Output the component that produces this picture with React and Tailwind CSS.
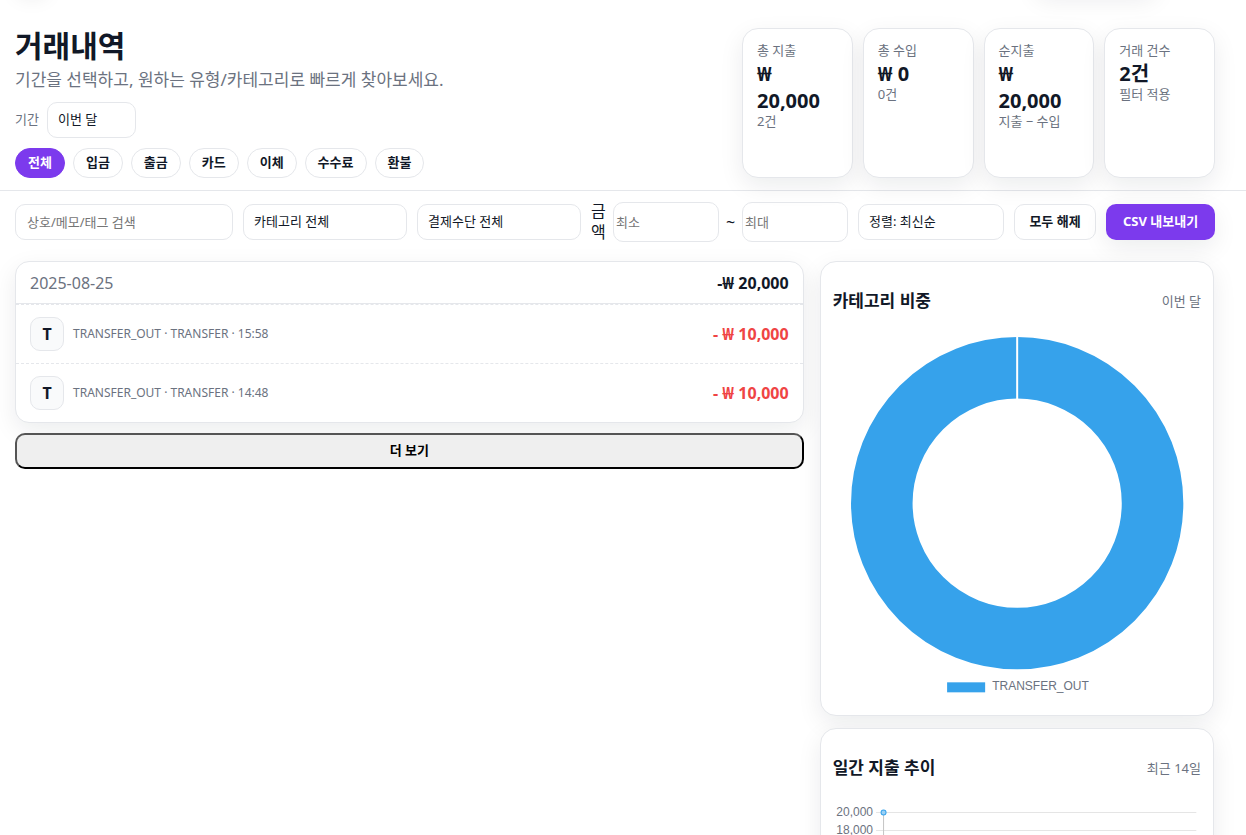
const surface = 'border border-gray-200 bg-white shadow-[0_8px_24px_rgba(15,23,42,0.08)]';
const field = 'h-9 w-full min-w-0 appearance-none rounded-[10px] border border-gray-200 bg-white text-[13px] text-[#111827]';
const amountField = 'h-10 w-0 min-w-0 flex-1 rounded-[10px] border border-gray-200 px-0.5 text-[13px] placeholder:text-[#757575]';

const won = (n) => `₩ ${n.toLocaleString('en-US')}`;

const stats = [
  { label: '총 지출', value: won(20000), note: '2건' },
  { label: '총 수입', value: won(0), note: '0건' },
  { label: '순지출', value: won(20000), note: '지출 − 수입' },
  { label: '거래 건수', value: '2건', note: '필터 적용' },
];

const types = ['전체', '입금', '출금', '카드', '이체', '수수료', '환불'];

const transactions = [
  { id: 1, detail: 'TRANSFER_OUT · TRANSFER · 15:58', amount: 10000 },
  { id: 2, detail: 'TRANSFER_OUT · TRANSFER · 14:48', amount: 10000 },
];

function StatCard({ label, value, note }) {
  return (
    <div className={`${surface} flex flex-col rounded-[16px] px-3.5 py-[11px]`}>
      <span className="text-[13px] leading-5 text-[#6b7280]">{label}</span>
      <strong className="text-[20px] font-bold leading-[27px]">{value}</strong>
      <span className="text-[13px] leading-[14px] text-[#6b7280]">{note}</span>
    </div>
  );
}

function PageHeader() {
  return (
    <header className="relative border-b border-gray-200 pt-7 pb-3">
      <div className="absolute -top-11 left-4 h-9 w-8 rounded-[10px] shadow-[0_6px_20px_rgba(15,23,42,0.08)]" />
      <div className="absolute -top-11 right-[90px] h-9 w-[120px] rounded-[10px] shadow-[0_8px_24px_rgba(15,23,42,0.08)]" />
      <div className="flex justify-between gap-6 pl-[15px] pr-[31px]">
        <div className="flex flex-col">
          <h1 className="text-[30px] font-bold leading-9">거래내역</h1>
          <p className="text-[17px] leading-8 text-[#6b7280]">
            기간을 선택하고, 원하는 유형/카테고리로 빠르게 찾아보세요.
          </p>
          <div className="mt-1.5 flex items-center gap-2">
            <label htmlFor="period" className="text-[13px] text-[#6b7280]">기간</label>
            <div className="w-[89px]">
              <select id="period" className={`${field} px-2.5`}>
                <option>이번 달</option>
              </select>
            </div>
          </div>
          <div className="mt-2.5 flex gap-2">
            {types.map((t, i) => (
              <button
                key={t}
                type="button"
                className={
                  i === 0
                    ? 'h-[30px] rounded-full border border-[#7c3aed] bg-[#7c3aed] px-3 text-[13px] font-bold text-white'
                    : 'h-[30px] rounded-full border border-gray-200 bg-white px-3 text-[13px] font-bold text-[#111827]'
                }
              >
                {t}
              </button>
            ))}
          </div>
        </div>
        <div className="grid w-[473px] shrink-0 grid-cols-4 gap-2.5">
          {stats.map((s) => (
            <StatCard key={s.label} {...s} />
          ))}
        </div>
      </div>
    </header>
  );
}

function Filters() {
  return (
    <form className="relative grid grid-cols-[218fr_164fr_164fr_257fr_146fr_82fr_109fr] items-center gap-2.5 pt-2.5 pb-[18px] pl-[15px] pr-[31px]">
      <input aria-label="검색" placeholder="상호/메모/태그 검색" className={`${field} px-[11px] placeholder:text-[#757575]`} />
      <select aria-label="카테고리" className={`${field} px-2.5`}>
        <option>카테고리 전체</option>
      </select>
      <select aria-label="결제수단" className={`${field} px-2.5`}>
        <option>결제수단 전체</option>
      </select>
      <div className="flex items-center gap-1.5">
        <span className="w-4 shrink-0 break-all text-[16px] leading-[21px]">금액</span>
        <input aria-label="최소 금액" placeholder="최소" className={amountField} />
        <span className="w-[11px] shrink-0 text-center text-[16px]">~</span>
        <input aria-label="최대 금액" placeholder="최대" className={amountField} />
      </div>
      <select aria-label="정렬" className={`${field} px-2.5`}>
        <option>정렬: 최신순</option>
      </select>
      <button type="button" className="h-9 whitespace-nowrap rounded-[10px] border border-gray-200 bg-white text-[13px] font-bold">
        모두 해제
      </button>
      <button type="button" className="h-9 whitespace-nowrap rounded-[10px] bg-[#7c3aed] text-[13px] font-bold text-white shadow-[0_8px_24px_rgba(15,23,42,0.08)]">
        CSV 내보내기
      </button>
    </form>
  );
}

function TransactionList() {
  return (
    <section className="flex flex-col gap-2.5">
      <div className={`${surface} rounded-[14px]`}>
        <div className="flex items-center justify-between border-b border-gray-200 px-3.5 pt-[11px] pb-[9px] text-[16px] leading-[21px]">
          <span className="text-[#6b7280]">2025-08-25</span>
          <strong className="font-bold">-{won(20000)}</strong>
        </div>
        <ul>
          {transactions.map((t) => (
            <li key={t.id} className="flex items-center gap-[9px] border-t border-dashed border-gray-200 px-3.5 py-3">
              <span className="flex size-[34px] shrink-0 items-center justify-center rounded-[10px] border border-gray-200 bg-[#f9fafb] text-[16px] font-bold">
                T
              </span>
              <span className="flex-1 text-[12px] text-[#6b7280]">{t.detail}</span>
              <strong className="text-[16px] font-bold text-[#ef4444]">- {won(t.amount)}</strong>
            </li>
          ))}
        </ul>
      </div>
      <button type="button" className="relative h-9 rounded-[10px] border-2 border-black border-t-[#555] border-l-[#555] bg-[#efefef] text-[13px] font-bold text-black">
        더 보기
      </button>
    </section>
  );
}

function ChartCard({ title, note, children }) {
  return (
    <section className={`${surface} rounded-[16px] p-3`}>
      <div className="mb-[7px] flex items-center justify-between py-4 leading-[22px]">
        <h3 className="text-[17px] font-semibold">{title}</h3>
        <span className="text-[13px] text-[#6b7280]">{note}</span>
      </div>
      {children}
    </section>
  );
}

function DonutChart() {
  return (
    <svg viewBox="0 0 368 368" className="block w-full" role="img" aria-label="카테고리 비중">
      <circle cx="184" cy="168" r="135.25" fill="none" stroke="#36a2eb" strokeWidth="61.5" />
      <path d="M184 1V65" stroke="#fff" strokeWidth="2" />
      <rect x="114" y="347" width="38" height="10" fill="#36a2eb" />
      <text x="159" y="355" fontSize="12" fill="#6b7280" fontFamily="Liberation Sans, Arial, sans-serif">TRANSFER_OUT</text>
    </svg>
  );
}

function TrendChart() {
  const ticks = Array.from({ length: 11 }, (_, i) => 20000 - i * 2000);
  return (
    <svg viewBox="0 0 368 200" className="block w-full" role="img" aria-label="일간 지출 추이">
      {ticks.map((value, i) => (
        <g key={value}>
          <path d={`M43 ${10.5 + i * 18}H363`} stroke="#e5e5e5" />
          <text x="40" y={14 + i * 18} textAnchor="end" fontSize="12" fill="#6b7280" fontFamily="Liberation Sans, Arial, sans-serif">
            {value.toLocaleString('en-US')}
          </text>
        </g>
      ))}
      <path d="M50.5 10V198" stroke="#c4c4c4" />
      <circle cx="50.5" cy="10.5" r="2.5" fill="#9ad0f5" stroke="#36a2eb" />
    </svg>
  );
}

export default function App() {
  return (
    <div className="min-h-screen bg-white font-['Noto_Sans','Noto_Sans_CJK_KR',sans-serif] text-[#111827]">
      <PageHeader />
      <Filters />
      <main className="relative grid grid-cols-[2fr_1fr] items-start gap-4 pb-8 pl-[15px] pr-8">
        <TransactionList />
        <aside className="flex flex-col gap-3">
          <ChartCard title="카테고리 비중" note="이번 달">
            <DonutChart />
          </ChartCard>
          <ChartCard title="일간 지출 추이" note="최근 14일">
            <TrendChart />
          </ChartCard>
        </aside>
      </main>
    </div>
  );
}
